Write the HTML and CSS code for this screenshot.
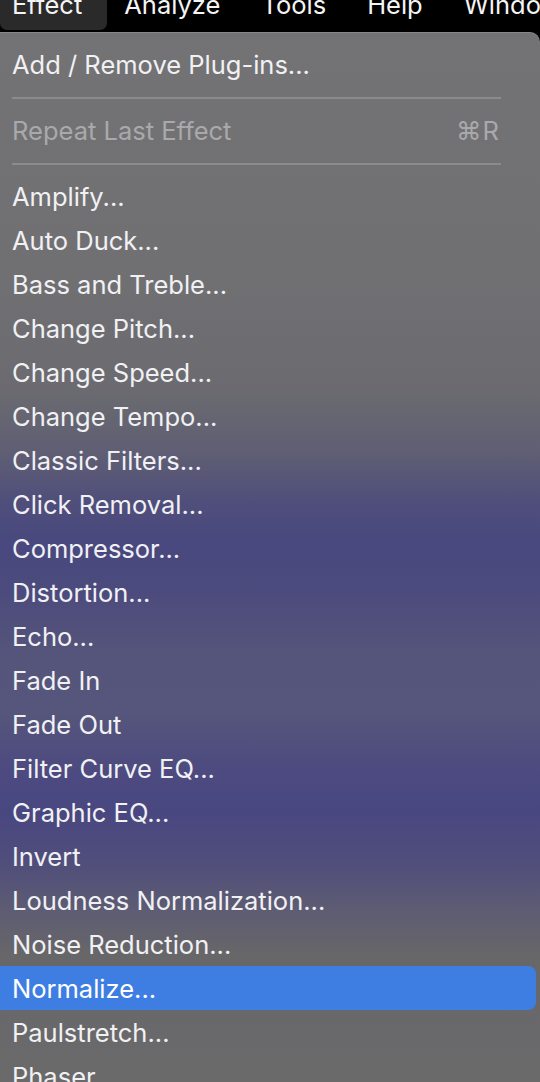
FILE: index.html
```html
<!DOCTYPE html>
<html>
<head>
<meta charset="utf-8">
<link rel="stylesheet" href="styles.css">
</head>
<body>
<div class="menubar">
  <div class="mb-item active"><span class="mb-text">Effect</span></div>
  <div class="mb-item"><span class="mb-text">Analyze</span></div>
  <div class="mb-item"><span class="mb-text">Tools</span></div>
  <div class="mb-item"><span class="mb-text">Help</span></div>
  <div class="mb-item"><span class="mb-text">Window</span></div>
</div>
<div class="menu">
  <div class="item">Add / Remove Plug-ins...</div>
  <div class="sep"></div>
  <div class="item disabled"><span>Repeat Last Effect</span><span class="shortcut">⌘R</span></div>
  <div class="sep"></div>
  <div class="item">Amplify...</div>
  <div class="item">Auto Duck...</div>
  <div class="item">Bass and Treble...</div>
  <div class="item">Change Pitch...</div>
  <div class="item">Change Speed...</div>
  <div class="item">Change Tempo...</div>
  <div class="item">Classic Filters...</div>
  <div class="item">Click Removal...</div>
  <div class="item">Compressor...</div>
  <div class="item">Distortion...</div>
  <div class="item">Echo...</div>
  <div class="item">Fade In</div>
  <div class="item">Fade Out</div>
  <div class="item">Filter Curve EQ...</div>
  <div class="item">Graphic EQ...</div>
  <div class="item">Invert</div>
  <div class="item">Loudness Normalization...</div>
  <div class="item">Noise Reduction...</div>
  <div class="item selected">Normalize...</div>
  <div class="item">Paulstretch...</div>
  <div class="item">Phaser</div>
</div>
</body>
</html>
```

FILE: styles.css
```css
html, body {
  margin: 0;
  padding: 0;
  width: 540px;
  height: 1082px;
  overflow: hidden;
  background: #000;
  font-family: Inter, "Liberation Sans", sans-serif;
  font-size: 25.5px;
  -webkit-font-smoothing: antialiased;
}

.menubar {
  height: 32px;
  background: #000;
  display: flex;
  align-items: flex-start;
  white-space: nowrap;
  overflow: hidden;
}

.mb-item {
  color: #f4f4f4;
  height: 30px;
  margin-right: 41px;
  overflow: hidden;
  flex-shrink: 0;
}

.mb-text {
  display: block;
  line-height: 26px;
  margin-top: -8px;
}

.mb-item.active {
  background: #2a2a2a;
  border-radius: 0 0 7px 7px;
  padding: 0 25px 0 12px;
  margin-right: 17px;
}

.menu {
  height: 1050px;
  padding-top: 9px;
  box-sizing: border-box;
  border-top: 1px solid #88888a;
  border-radius: 0 10px 0 0;
  background: linear-gradient(180deg,
    #737375 0px,
    #707073 250px,
    #6a6a70 360px,
    #5f5e74 420px,
    #4f4e7b 470px,
    #49487f 510px,
    #4c4b7d 560px,
    #55547a 620px,
    #56557b 680px,
    #4c4a80 740px,
    #494780 780px,
    #504e7b 830px,
    #5e5d72 880px,
    #676669 920px,
    #6a6a6b 1050px);
}

.item {
  height: 44px;
  display: flex;
  align-items: center;
  justify-content: space-between;
  padding: 0 40px 0 12px;
  color: #f1f1f3;
  white-space: nowrap;
}

.item.disabled {
  color: #a9a9ab;
}

.shortcut {
  letter-spacing: 1px;
}

.item.selected {
  background: #3e7ee3;
  border-radius: 8px;
  margin: 0 4px 0 -8px;
  padding-left: 20px;
  color: #fff;
}

.sep {
  height: 22px;
  display: flex;
  flex-direction: column;
  padding: 0 39px 0 12px;
  box-sizing: border-box;
}

.sep::before {
  content: "";
  display: block;
  margin-top: 11px;
  height: 2px;
  background: #8b8b8e;
}
```
